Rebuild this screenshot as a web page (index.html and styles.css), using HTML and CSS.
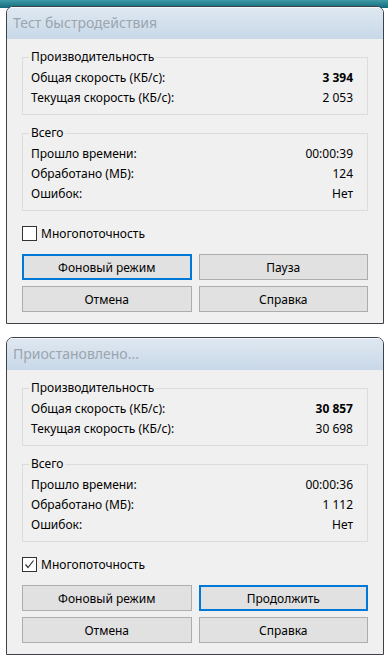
FILE: index.html
```html
<!DOCTYPE html>
<html lang="ru">
<head>
    <meta charset="UTF-8">
    <meta name="viewport" content="width=device-width, initial-scale=1.0">
    <title>Тест быстродействия</title>
    <link rel="stylesheet" href="styles.css">
</head>
<body>

<!-- Окно 1: тест идёт -->
<div class="window">
    <div class="titlebar">Тест быстродействия</div>
    <div class="window-body">
        <fieldset class="group">
            <legend>Производительность</legend>
            <div class="row"><span>Общая скорость (КБ/с):</span><span class="value bold">3&nbsp;394</span></div>
            <div class="row"><span>Текущая скорость (КБ/с):</span><span class="value">2&nbsp;053</span></div>
        </fieldset>

        <fieldset class="group">
            <legend>Всего</legend>
            <div class="row"><span>Прошло времени:</span><span class="value">00:00:39</span></div>
            <div class="row"><span>Обработано (МБ):</span><span class="value">124</span></div>
            <div class="row"><span>Ошибок:</span><span class="value">Нет</span></div>
        </fieldset>

        <div class="check">
            <span class="check-box"></span>
            <span>Многопоточность</span>
        </div>

        <div class="buttons">
            <button class="btn default">Фоновый режим</button>
            <button class="btn">Пауза</button>
            <button class="btn">Отмена</button>
            <button class="btn">Справка</button>
        </div>
    </div>
</div>

<!-- Окно 2: пауза -->
<div class="window">
    <div class="titlebar">Приостановлено...</div>
    <div class="window-body">
        <fieldset class="group">
            <legend>Производительность</legend>
            <div class="row"><span>Общая скорость (КБ/с):</span><span class="value bold">30&nbsp;857</span></div>
            <div class="row"><span>Текущая скорость (КБ/с):</span><span class="value">30&nbsp;698</span></div>
        </fieldset>

        <fieldset class="group">
            <legend>Всего</legend>
            <div class="row"><span>Прошло времени:</span><span class="value">00:00:36</span></div>
            <div class="row"><span>Обработано (МБ):</span><span class="value">1&nbsp;112</span></div>
            <div class="row"><span>Ошибок:</span><span class="value">Нет</span></div>
        </fieldset>

        <div class="check">
            <span class="check-box">
                <svg width="11" height="11" viewBox="0 0 11 11"><polyline points="1.5,5.5 4,8.5 9.5,1.5" fill="none" stroke="#333" stroke-width="1.2"/></svg>
            </span>
            <span>Многопоточность</span>
        </div>

        <div class="buttons">
            <button class="btn">Фоновый режим</button>
            <button class="btn default">Продолжить</button>
            <button class="btn">Отмена</button>
            <button class="btn">Справка</button>
        </div>
    </div>
</div>

</body>
</html>
```

FILE: styles.css
```css
body {
    margin: 0;
    font-family: "Noto Sans", Arial, sans-serif;
    font-size: 12px;
    color: #000;
    background: linear-gradient(#3e9ba6, #12697a) top left / 100% 8px no-repeat, #fff;
}

.window {
    width: 376px;
    margin: 6px 0 0 6px;
    border: 1px solid #3c4248;
    border-radius: 7px 7px 0 0;
    background: #f0f0f0;
    overflow: hidden;
}

.window + .window {
    margin-top: 13px;
}

.titlebar {
    height: 32px;
    line-height: 32px;
    padding-left: 6px;
    font-size: 14px;
    color: #9ba5af;
    background: linear-gradient(#dfe8f1, #c8d8e8);
    box-shadow: inset 0 1px 0 #f4f8fb;
}

.window-body {
    padding: 10px 15px 11px 15px;
}

.group {
    margin: 0 0 10px 0;
    padding: 3px 14px 6px 8px;
    border: 1px solid #dcdcdc;
    min-width: 0;
}

.group legend {
    padding: 0 2px;
    margin-left: -2px;
    line-height: 16px;
}

.row {
    display: flex;
    justify-content: space-between;
    height: 20px;
    line-height: 20px;
}

.bold {
    font-weight: bold;
}

.check {
    display: flex;
    align-items: center;
    margin-top: 14px;
    height: 16px;
}

.check-box {
    width: 13px;
    height: 13px;
    border: 1px solid #333;
    background: #fff;
    margin-right: 4px;
    display: flex;
    align-items: center;
    justify-content: center;
}

.buttons {
    display: grid;
    grid-template-columns: 1fr 1fr;
    column-gap: 7px;
    row-gap: 6px;
    margin-top: 13px;
}

.btn {
    height: 26px;
    font-family: inherit;
    font-size: 12px;
    color: #000;
    background: #e1e1e1;
    border: 1px solid #adadad;
    padding: 0;
}

.btn.default {
    border: 2px solid #0078d7;
}
```
